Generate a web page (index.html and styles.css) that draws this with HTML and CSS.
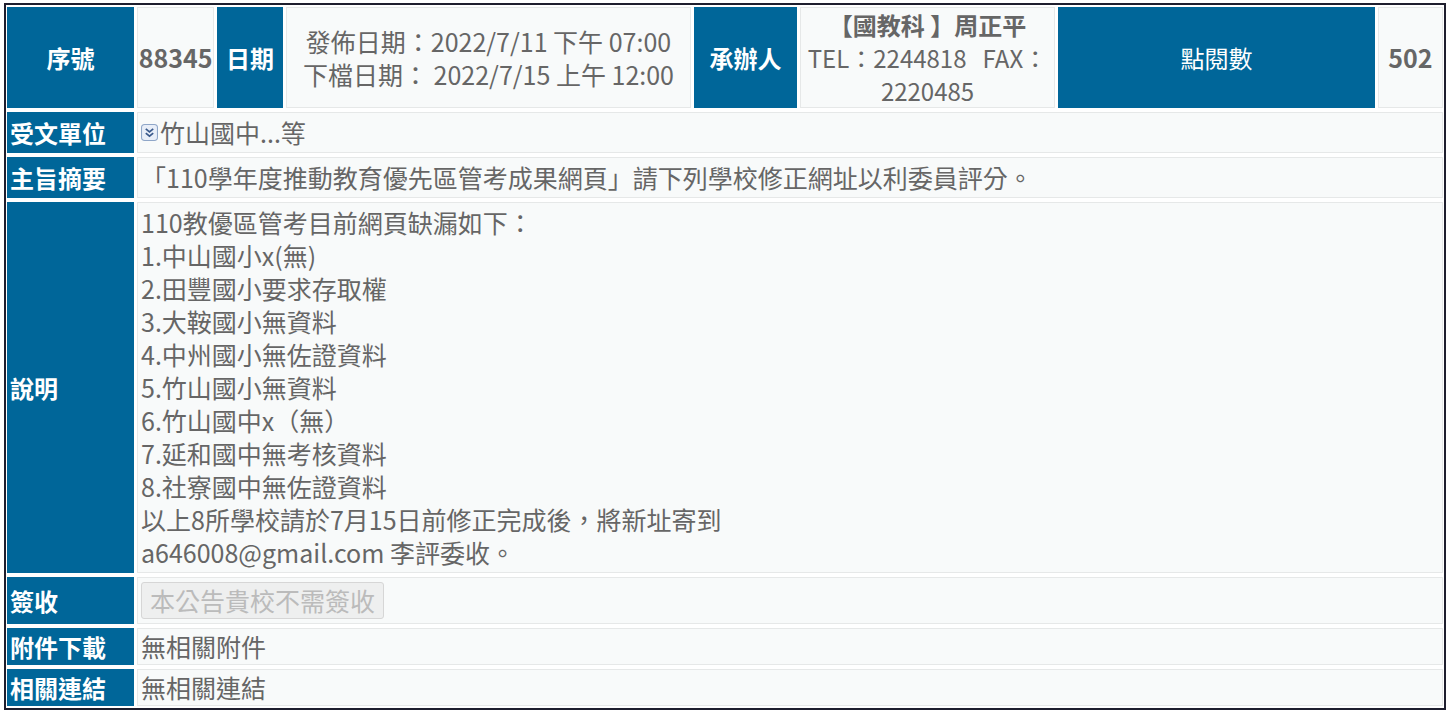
FILE: index.html
```html
<!DOCTYPE html>
<html lang="zh-Hant">
<head>
    <meta charset="UTF-8">
    <meta name="viewport" content="width=device-width, initial-scale=1.0">
    <title>公告內容</title>
    <link rel="stylesheet" href="styles.css">
</head>
<body>
    <div class="board">
        <div class="head-row">
            <div class="label center">序號</div>
            <div class="value center num">88345</div>
            <div class="label center">日期</div>
            <div class="value center">
                <div>發佈日期：2022/7/11 下午 07:00</div>
                <div>下檔日期： 2022/7/15 上午 12:00</div>
            </div>
            <div class="label center">承辦人</div>
            <div class="value center contact">
                <div class="strong">【國教科 】周正平</div>
                <div>TEL：2244818&nbsp;&nbsp;&nbsp;FAX：2220485</div>
            </div>
            <div class="label center thin">點閱數</div>
            <div class="value center num">502</div>
        </div>

        <div class="row">
            <div class="label">受文單位</div>
            <div class="value">
                <span class="more-icon">
                    <svg width="17" height="17" viewBox="0 0 16 16">
                        <rect x="0.5" y="0.5" width="15" height="15" rx="3" fill="#e8eef8" stroke="#8fa6c8"/>
                        <path d="M4.5 4.5 L8 7.5 L11.5 4.5 M4.5 8.5 L8 11.5 L11.5 8.5" fill="none" stroke="#3a5a8c" stroke-width="1.6"/>
                    </svg>
                </span>竹山國中...等
            </div>
        </div>

        <div class="row">
            <div class="label">主旨摘要</div>
            <div class="value">「110學年度推動教育優先區管考成果網頁」請下列學校修正網址以利委員評分。</div>
        </div>

        <div class="row">
            <div class="label">說明</div>
            <div class="value text">
                110教優區管考目前網頁缺漏如下：<br>
                1.中山國小x(無)<br>
                2.田豐國小要求存取權<br>
                3.大鞍國小無資料<br>
                4.中州國小無佐證資料<br>
                5.竹山國小無資料<br>
                6.竹山國中x（無）<br>
                7.延和國中無考核資料<br>
                8.社寮國中無佐證資料<br>
                以上8所學校請於7月15日前修正完成後，將新址寄到<br>
                a646008@gmail.com 李評委收。
            </div>
        </div>

        <div class="row">
            <div class="label">簽收</div>
            <div class="value">
                <button class="sign-btn" disabled>本公告貴校不需簽收</button>
            </div>
        </div>

        <div class="row short">
            <div class="label">附件下載</div>
            <div class="value">無相關附件</div>
        </div>

        <div class="row short">
            <div class="label">相關連結</div>
            <div class="value">無相關連結</div>
        </div>
    </div>
</body>
</html>
```

FILE: styles.css
```css
body {
    margin: 0;
    font-family: "Noto Sans CJK TC", "Noto Sans", sans-serif;
    font-size: 25px;
    line-height: 33px;
    color: #666;
    background: #fff;
}
.board {
    width: 1436px;
    margin: 3px 0 0 4px;
    padding: 2px 1px;
    border: 2px solid #1e1e2e;
    display: flex;
    flex-direction: column;
    gap: 4px;
}
.head-row {
    display: grid;
    grid-template-columns: 127px 77px 66px 405px 103px 255px 317px 1fr;
    gap: 3px;
    height: 101px;
}
.row {
    display: grid;
    grid-template-columns: 127px 1fr;
    gap: 3px;
    min-height: 41px;
}
.row.short {
    min-height: 37px;
}
.label {
    background: #006699;
    color: #fff;
    font-weight: bold;
    font-size: 24px;
    padding: 0 3px;
    display: flex;
    align-items: center;
}
.label.thin {
    font-weight: normal;
}
.center {
    justify-content: center;
    text-align: center;
}
.value {
    background: #f8fafa;
    border: 1px solid #e6e8e8;
    padding: 0 3px;
    display: flex;
    align-items: center;
    white-space: nowrap;
}
.head-row .value {
    flex-direction: column;
    white-space: normal;
    padding: 0 2px;
}
.head-row .contact {
    font-size: 24px;
    padding: 0 1px;
}
.num {
    font-weight: bold;
}
.strong {
    font-weight: bold;
}
.value.text {
    display: block;
    padding: 3px;
}
.more-icon {
    display: inline-flex;
    margin-right: 2px;
}
.sign-btn {
    font-family: inherit;
    font-size: 25px;
    line-height: 31px;
    color: #bbb;
    background: #eeefef;
    border: 1px solid #d6d6d6;
    border-radius: 3px;
    padding: 2px 8px;
    margin: 4px 0;
}
```
